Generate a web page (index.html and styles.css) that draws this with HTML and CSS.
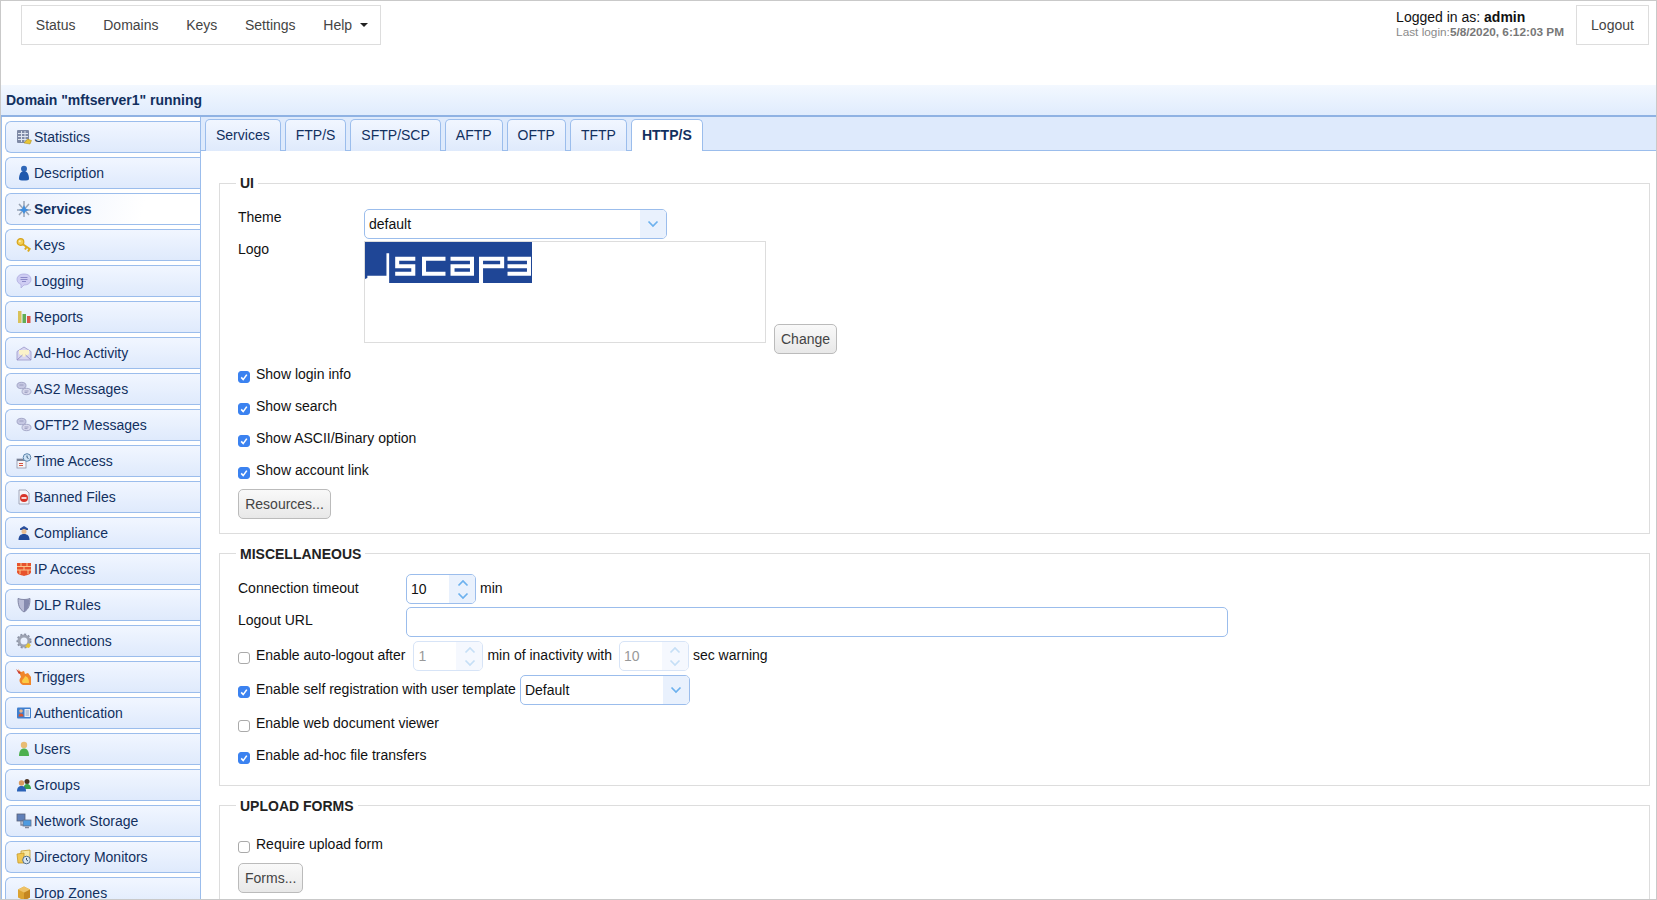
FILE: index.html
```html
<!DOCTYPE html>
<html lang="en">
<head>
<meta charset="utf-8">
<title>Domain mftserver1</title>
<link rel="stylesheet" href="styles.css">
</head>
<body>
<svg class="defs" width="0" height="0" aria-hidden="true">
  <symbol id="down" viewBox="0 0 12 8"><path d="M1.500 1.500 6 6l4.500-4.500" fill="none" stroke="currentColor" stroke-width="1.700"/></symbol>
  <symbol id="up" viewBox="0 0 12 8"><path d="M1.500 6.500 6 2l4.500 4.500" fill="none" stroke="currentColor" stroke-width="1.700"/></symbol>
  <symbol id="tick" viewBox="0 0 12 12"><path d="M3.200 6.400 5.200 8.600 8.800 3.600" fill="none" stroke="#fff" stroke-width="1.600"/></symbol>
</svg>
<div class="page">
  <header class="top">
    <nav class="menu">
      <a>Status</a><a>Domains</a><a>Keys</a><a>Settings</a><a class="help">Help<i class="caret"></i></a>
    </nav>
    <div class="account">
      <div class="who">
        <div class="logged">Logged in as: <b>admin</b></div>
        <div class="last">Last login:<b>5/8/2020, 6:12:03 PM</b></div>
      </div>
      <a class="logout">Logout</a>
    </div>
  </header>
  <div class="title">Domain "mftserver1" running</div>
  <div class="main">
    <aside class="side">
      <a class="item"><svg class="ic" viewBox="0 0 16 16"><rect x="1" y="1" width="12" height="13" rx="1" fill="#7f8aa6"/><path d="M2 4.500h10M2 7.500h10M2 10.500h10M5.500 2v11M9 2v11" stroke="#dfe5f0"/><path d="M8 14l3.500-4 4 1.500-1.500 3.500z" fill="#e7c534" stroke="#a88a1e" stroke-width=".5"/></svg>Statistics</a>
      <a class="item"><svg class="ic" viewBox="0 0 16 16"><circle cx="8" cy="3.800" r="3" fill="#2f67b8"/><path d="M8 6c-3.500 0-5 4-5 8 0 1 2 1.500 5 1.500s5-.5 5-1.500c0-4-1.500-8-5-8z" fill="#1f58ad"/></svg>Description</a>
      <a class="item active"><svg class="ic" viewBox="0 0 16 16"><path d="M8 0v16M1 9h14M3 3l10 11M13 3 3 14" stroke="#9ba5b5" stroke-width="1.500"/><path d="M8 4l1.600 3.400L13 9l-3.400 1.200L8 13l-1.600-2.800L3 9l3.400-1.600z" fill="#3e8ee0"/></svg>Services</a>
      <a class="item"><svg class="ic" viewBox="0 0 16 16"><circle cx="4.500" cy="5" r="3.300" fill="#f3cf55" stroke="#d6a31c" stroke-width="1.200"/><circle cx="3.800" cy="4.300" r="1" fill="#fbf0c4"/><path d="M6.500 7l8 5.500M10.500 10l-1.500 2.500M13.500 12l-1.500 2.500" stroke="#dcaa1c" stroke-width="2"/></svg>Keys</a>
      <a class="item"><svg class="ic" viewBox="0 0 16 16"><path d="M8 1c4 0 7 2 7 5.500S12 12 8 12l-3 3v-3.600C2.500 10.500 1 8.800 1 6.500 1 3 4 1 8 1z" fill="#cfcdf3" stroke="#a9a6dc" stroke-width=".7"/><path d="M4.500 4.500h7M4.500 6.500h7M6 8.500h4" stroke="#8d8ac9"/></svg>Logging</a>
      <a class="item"><svg class="ic" viewBox="0 0 16 16"><rect x="2" y="2" width="3.500" height="12" fill="#d9c25a"/><rect x="6.500" y="5" width="3.500" height="9" fill="#62ad55"/><rect x="11" y="7" width="3.500" height="7" fill="#d9574a"/></svg>Reports</a>
      <a class="item"><svg class="ic" viewBox="0 0 16 16"><path d="M1 6.500 8 2l7 4.500V15H1z" fill="#d8d6f0" stroke="#9a97c9" stroke-width=".8"/><path d="M3 5h10v4l-5 3-5-3z" fill="#fbf2c9"/><path d="M1 15l5.500-5M15 15 9.500 10" stroke="#9a97c9"/></svg>Ad-Hoc Activity</a>
      <a class="item"><svg class="ic" viewBox="0 0 16 16"><ellipse cx="5.500" cy="4.500" rx="4.500" ry="3.200" fill="#c5c7e2" stroke="#8f92b8" stroke-width=".7"/><ellipse cx="10.500" cy="10.500" rx="4.500" ry="3.200" fill="#d7d8ec" stroke="#8f92b8" stroke-width=".7"/><path d="M3.500 4h4M8.500 10h4M8.500 11.600h3" stroke="#8f92b8" stroke-width=".8"/></svg>AS2 Messages</a>
      <a class="item"><svg class="ic" viewBox="0 0 16 16"><ellipse cx="5.500" cy="4.500" rx="4.500" ry="3.200" fill="#c5c7e2" stroke="#8f92b8" stroke-width=".7"/><ellipse cx="10.500" cy="10.500" rx="4.500" ry="3.200" fill="#d7d8ec" stroke="#8f92b8" stroke-width=".7"/><path d="M3.500 4h4M8.500 10h4M8.500 11.600h3" stroke="#8f92b8" stroke-width=".8"/></svg>OFTP2 Messages</a>
      <a class="item"><svg class="ic" viewBox="0 0 16 16"><rect x="1" y="6" width="9" height="9" fill="#f4f4f8" stroke="#8e93a8" stroke-width=".8"/><rect x="1" y="6" width="9" height="2" fill="#7a8296"/><path d="M3 10.500h4M3 12.500h4" stroke="#d5533f"/><circle cx="11" cy="4.500" r="3.800" fill="#cfe3f6" stroke="#5c86ad"/><path d="M11 2.500v2l1.500 1" stroke="#35587a" fill="none"/></svg>Time Access</a>
      <a class="item"><svg class="ic" viewBox="0 0 16 16"><path d="M3 1h7l3 3v11H3z" fill="#f5f5fa" stroke="#8f94a8" stroke-width=".8"/><circle cx="8" cy="9" r="4" fill="#d8352a"/><rect x="5.500" y="8.200" width="5" height="1.600" fill="#fff"/></svg>Banned Files</a>
      <a class="item"><svg class="ic" viewBox="0 0 16 16"><path d="M4 3.500 8 1l4 2.500V5H4z" fill="#2a4f9c"/><circle cx="8" cy="6.500" r="2.500" fill="#e9bd92"/><path d="M2.500 15c0-4 2-6 5.500-6s5.500 2 5.500 6z" fill="#234a99"/></svg>Compliance</a>
      <a class="item"><svg class="ic" viewBox="0 0 16 16"><path d="M1 2h14v9c0 2-3 3-7 4-4-1-7-2-7-4z" fill="#e7532d"/><path d="M1 5.500h14M1 9h14M5 2v3.500M11 2v3.500M8 5.500V9M4 9v4M12 9v4" stroke="#fbc58a"/></svg>IP Access</a>
      <a class="item"><svg class="ic" viewBox="0 0 16 16"><path d="M2 1.500c2 .8 4 1 6 1s4-.2 6-1c0 6-1 10.500-6 13.500C3 12 2 7.500 2 1.500z" fill="#b9bcd6" stroke="#6f7394" stroke-width=".8"/><path d="M8 2.500V15c4-2.500 5.400-7 5.400-12.500z" fill="#858aae"/></svg>DLP Rules</a>
      <a class="item"><svg class="ic" viewBox="0 0 16 16"><circle cx="8" cy="8" r="5" fill="none" stroke="#9da3b2" stroke-width="3"/><circle cx="8" cy="8" r="6.800" fill="none" stroke="#8a91a3" stroke-width="1.500" stroke-dasharray="2 2"/><path d="M9 14l3-4 3 2-2 3z" fill="#e7c534"/></svg>Connections</a>
      <a class="item"><svg class="ic" viewBox="0 0 16 16"><path d="M2 0l3 3 3-1 1 3 3-1 3 4v8H7C4 15 2 11 5 8z" fill="#f0872b"/><path d="M6 13c0-3 3-4 3-6 3 1 4 3 4 7H7z" fill="#fbcb45"/><path d="M0 0l3 5 2-1z" fill="#c9352a"/></svg>Triggers</a>
      <a class="item"><svg class="ic" viewBox="0 0 16 16"><rect x="1" y="2.500" width="14" height="11" rx="1" fill="#3f7fcf"/><rect x="8.500" y="4" width="5.500" height="8" fill="#e8eef7"/><circle cx="5" cy="6" r="1.800" fill="#e9b58a"/><path d="M2.500 11.500c0-2 1-3 2.500-3s2.500 1 2.500 3z" fill="#d8552f"/><path d="M9.500 6h3.500M9.500 8h3.500M9.500 10h3.500" stroke="#8ea4c4"/></svg>Authentication</a>
      <a class="item"><svg class="ic" viewBox="0 0 16 16"><circle cx="8" cy="4" r="3.200" fill="#e8bc74"/><path d="M3 15c0-5 1.800-7.500 5-7.500s5 2.500 5 7.500z" fill="#4db04f"/></svg>Users</a>
      <a class="item"><svg class="ic" viewBox="0 0 16 16"><circle cx="11" cy="4.500" r="2.500" fill="#4a3322"/><path d="M7.500 12c0-3.500 1.500-5 3.500-5s4 1.500 4 5z" fill="#3ba24a"/><circle cx="5.500" cy="6" r="2.700" fill="#d99b60"/><path d="M1 14.500c0-4 1.800-5.500 4.500-5.500S10 10.500 10 14.500z" fill="#2a62b8"/></svg>Groups</a>
      <a class="item"><svg class="ic" viewBox="0 0 16 16"><rect x="1" y="1" width="8" height="7" fill="#5f7fb8" stroke="#59617a" stroke-width=".8"/><rect x="7" y="7" width="8" height="6" fill="#4e9be0" stroke="#666e85" stroke-width=".8"/><path d="M5 8v4h2M9 14.500h4" stroke="#7f869a" stroke-width="1.300" fill="none"/></svg>Network Storage</a>
      <a class="item"><svg class="ic" viewBox="0 0 16 16"><path d="M5 2l9-1v9l-9 2z" fill="#f7e7a0" stroke="#c79a2b" stroke-width=".8"/><path d="M1 5l7-1v10H2z" fill="#f1c751" stroke="#c79a2b" stroke-width=".8"/><circle cx="10.500" cy="11" r="3.800" fill="#d8e6f4" stroke="#4f6d8c"/><path d="M10.500 9v2l1.500 1" stroke="#35506b" fill="none"/></svg>Directory Monitors</a>
      <a class="item"><svg class="ic" viewBox="0 0 16 16"><path d="M2 4.500 8 1.500l6 3v8l-6 3-6-3z" fill="#dca331"/><path d="M8 7.500v8l6-3v-8z" fill="#c4861f"/><path d="M2 4.500l6 3 6-3-6-3z" fill="#eec267"/></svg>Drop Zones</a>
    </aside>
    <section class="content">
      <div class="tabs">
        <a class="tab">Services</a><a class="tab">FTP/S</a><a class="tab">SFTP/SCP</a><a class="tab">AFTP</a><a class="tab">OFTP</a><a class="tab">TFTP</a><a class="tab on">HTTP/S</a>
      </div>
      <div class="panel">
        <fieldset class="group ui">
          <legend>UI</legend>
          <div class="row theme-row">
            <span class="lbl top-lbl col-a">Theme</span>
            <div class="select wide"><span class="val">default</span><span class="arrow"><svg class="chev"><use href="#down"/></svg></span></div>
          </div>
          <div class="row logo-row">
            <span class="lbl top-lbl col-a">Logo</span>
            <div class="logo-box">
              <svg class="logo" viewBox="0 0 498 120" preserveAspectRatio="none" role="img" aria-label="JSCAPE logo">
                <rect width="498" height="120" fill="#1f4696"/>
                <path fill="#fff" d="M64 33h8v87H0v-12l7-3v-6h57z"/>
                <path fill="none" stroke="#fff" stroke-width="12" d="M150 49H96V71H144V93H90M240 49H176V93H240M255 49H319V93H261V71H319M346 120V49H409V71H346M425 49H489V93H425M425 71H489"/>
              </svg>
            </div>
            <button class="btn change">Change</button>
          </div>
          <label class="check-row first"><span class="cb on"><svg><use href="#tick"/></svg></span>Show login info</label>
          <label class="check-row"><span class="cb on"><svg><use href="#tick"/></svg></span>Show search</label>
          <label class="check-row"><span class="cb on"><svg><use href="#tick"/></svg></span>Show ASCII/Binary option</label>
          <label class="check-row"><span class="cb on"><svg><use href="#tick"/></svg></span>Show account link</label>
          <button class="btn resources">Resources...</button>
        </fieldset>
        <fieldset class="group misc low">
          <legend>MISCELLANEOUS</legend>
          <div class="row r-timeout">
            <span class="lbl col-b">Connection timeout</span>
            <div class="spin"><span class="val">10</span><span class="steps"><svg class="chev"><use href="#up"/></svg><svg class="chev"><use href="#down"/></svg></span></div>
            <span class="lbl after">min</span>
          </div>
          <div class="row r-url">
            <span class="lbl col-b">Logout URL</span>
            <div class="textbox"></div>
          </div>
          <div class="row r-auto">
            <span class="cb inline"></span>
            <span class="lbl">Enable auto-logout after</span>
            <div class="spin off gap-l"><span class="val">1</span><span class="steps"><svg class="chev"><use href="#up"/></svg><svg class="chev"><use href="#down"/></svg></span></div>
            <span class="lbl after">min of inactivity with</span>
            <div class="spin off gap-m"><span class="val">10</span><span class="steps"><svg class="chev"><use href="#up"/></svg><svg class="chev"><use href="#down"/></svg></span></div>
            <span class="lbl after">sec warning</span>
          </div>
          <div class="row r-self">
            <span class="cb on inline"><svg><use href="#tick"/></svg></span>
            <span class="lbl">Enable self registration with user template</span>
            <div class="select small"><span class="val">Default</span><span class="arrow"><svg class="chev"><use href="#down"/></svg></span></div>
          </div>
          <label class="check-row web"><span class="cb"></span>Enable web document viewer</label>
          <label class="check-row"><span class="cb on"><svg><use href="#tick"/></svg></span>Enable ad-hoc file transfers</label>
        </fieldset>
        <fieldset class="group upload low">
          <legend>UPLOAD FORMS</legend>
          <label class="check-row req"><span class="cb"></span>Require upload form</label>
          <button class="btn forms">Forms...</button>
        </fieldset>
      </div>
    </section>
  </div>
</div>
</body>
</html>
```
FILE: styles.css
```css
* { box-sizing: border-box; }
html, body { margin: 0; padding: 0; background: #fff; }
body { font-family: "Liberation Sans", Arial, sans-serif; font-size: 14px; line-height: 16px; color: #111; }
.defs { position: absolute; }
.page { width: 1657px; height: 900px; border: 1px solid #c9c9c9; overflow: hidden; display: flex; flex-direction: column; }

.top { height: 84px; flex: none; display: flex; justify-content: space-between; align-items: flex-start; padding: 4px 7px 0 20px; }
.menu { display: flex; align-items: center; height: 40px; border: 1px solid #ddd; padding-right: 12px; color: #444; }
.menu a { padding: 0 13.85px; }
.menu a.help { padding-right: 0; display: flex; align-items: center; }
.caret { width: 0; height: 0; margin-left: 8px; border: 4.5px solid transparent; border-top-color: #222; border-bottom: 0; }
.account { display: flex; align-items: flex-start; }
.who { margin-right: 12px; padding-top: 4px; }
.logged { color: #111; }
.last { font-size: 11.8px; line-height: 13px; margin-top: 1px; color: #8a8a8a; }
.last b { color: #777; }
.logout { width: 73px; height: 40px; border: 1px solid #ddd; color: #444; display: flex; align-items: center; justify-content: center; }

.title { height: 32px; flex: none; padding: 7px 5px 0; font-weight: 700; color: #12305f; background: linear-gradient(#f3f8ff, #e0ecfd); border-bottom: 2px solid #8fb2e3; }

.main { flex: 1; display: flex; min-height: 0; border-left: 1px solid #9bbdec; }
.side { width: 199px; flex: none; padding: 4px 0 0 3px; display: flex; flex-direction: column; gap: 4px; border-right: 1px solid #9bbdec; overflow: hidden; }
.item { flex: none; height: 32px; display: flex; align-items: center; gap: 2px; padding-left: 10px; color: #12305f; border: 1px solid #9bbdec; border-right: 0; border-radius: 6px 0 0 6px; background: linear-gradient(#f1f6ff, #dfeafc); }
.item.active { font-weight: 700; margin-right: -1px; background: linear-gradient(100deg, #e9f0fd, #fff 70%); }
.ic { width: 16px; height: 16px; flex: none; }

.content { flex: 1; min-width: 0; display: flex; flex-direction: column; }
.tabs { flex: none; height: 34px; padding: 2px 0 0 4px; display: flex; gap: 4px; background: #deeafc; border-bottom: 1px solid #9bbdec; }
.tab { height: 32px; padding: 0 10px 2px; display: flex; align-items: center; color: #12305f; border: 1px solid #9bbdec; border-bottom: 0; border-radius: 5px 5px 0 0; background: linear-gradient(#f1f6ff, #dfeafc); }
.tab.on { background: #fff; font-weight: 700; }

.panel { flex: 1; padding: 24px 6px 0 18px; display: flex; flex-direction: column; gap: 10px; }
.group { margin: 0; min-width: 0; border: 1px solid #ddd; padding: 0 18px; flex: none; }
.group legend { margin-left: -2px; padding: 0 4px; font-weight: 700; color: #222; line-height: 16px; }
.low legend { padding-top: 2px; }
.ui { padding-bottom: 14px; }
.misc { padding-bottom: 21px; }
.upload { padding-bottom: 30px; }

.row { display: flex; align-items: center; height: 30px; }
.lbl { margin-bottom: 2px; white-space: nowrap; }
.col-a { width: 126px; flex: none; }
.col-b { width: 168px; flex: none; }
.top-lbl { align-self: flex-start; margin: 0; }
.after { margin-left: 4px; }
.theme-row { margin-top: 18px; }
.logo-row { margin-top: 2px; height: 113px; align-items: flex-end; }

.select, .spin, .textbox { height: 30px; border: 1px solid #9bbdec; border-radius: 5px; background: #fff; display: flex; overflow: hidden; flex: none; }
.val { flex: 1; padding: 0 0 0 4px; align-self: center; color: #111; }
.wide { width: 303px; }
.small { width: 170px; margin-left: 4px; }
.arrow { width: 26px; background: #e9f1fd; display: flex; align-items: center; justify-content: center; color: #6db1ee; }
.chev { width: 12px; height: 8px; display: block; }
.spin { width: 70px; }
.steps { width: 26px; padding-left: 1px; background: #e9f1fd; display: flex; flex-direction: column; align-items: center; justify-content: center; gap: 5px; color: #6db1ee; }
.spin.off { border-color: #d7e4f7; }
.spin.off .val { color: #999; }
.spin.off .steps { background: #f5f8fe; color: #c6dff6; }
.gap-l { margin-left: 8px; }
.gap-m { margin-left: 7px; }
.textbox { width: 822px; }

.logo-box { width: 402px; height: 102px; border: 1px solid #ddd; align-self: flex-start; flex: none; }
.logo { width: 167px; height: 41px; display: block; }
.btn { font: inherit; color: #444; height: 30px; padding: 0 6px; border: 1px solid #bbb; border-radius: 5px; background: linear-gradient(#f9f9f9, #e8e8e8); display: block; }
.change { width: 63px; margin-left: 8px; }
.resources { width: 93px; margin-top: 10px; }
.forms { width: 65px; margin-top: 10px; }

.check-row { display: flex; align-items: flex-start; height: 17px; margin-top: 15px; }
.check-row.first { margin-top: 12px; }
.check-row.web { margin-top: 10px; }
.check-row.req { margin-top: 22px; }
.cb { width: 12px; height: 12px; flex: none; margin: 5px 6px 0 0; border: 1px solid #aaa; border-radius: 3px; background: #fff; display: block; }
.cb.on { background: #3b82f0; border-color: #3b82f0; }
.cb svg { width: 12px; height: 12px; display: block; margin: -1px; }
.cb.inline { margin-top: 4px; }

.r-timeout { margin-top: 12px; }
.r-url { margin-top: 3px; }
.r-url .lbl { margin-bottom: 4px; }
.r-auto { margin-top: 4px; }
.r-self { margin-top: 4px; }
```
